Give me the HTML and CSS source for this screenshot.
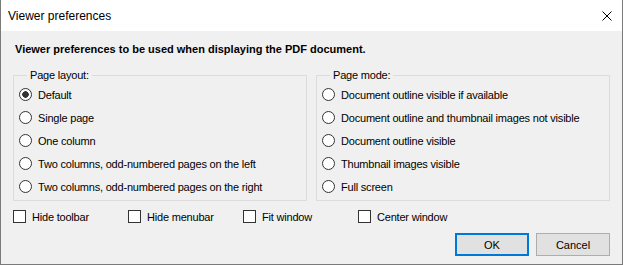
FILE: index.html
```html
<!DOCTYPE html>
<html lang="en">
<head>
  <meta charset="UTF-8">
  <title>Viewer preferences</title>
  <link rel="stylesheet" href="styles.css">
</head>
<body>
  <div class="window">
    <div class="titlebar">
      <span class="title">Viewer preferences</span>
      <svg class="close" width="10" height="10" viewBox="0 0 10 10">
        <path d="M0.5 0.5 L9.5 9.5 M9.5 0.5 L0.5 9.5" stroke="#000" stroke-width="1" fill="none"/>
      </svg>
    </div>

    <div class="content">
      <p class="intro">Viewer preferences to be used when displaying the PDF document.</p>

      <div class="groups">
        <fieldset class="group">
          <legend>Page layout:</legend>
          <label class="option"><input type="radio" name="layout" checked> Default</label>
          <label class="option"><input type="radio" name="layout"> Single page</label>
          <label class="option"><input type="radio" name="layout"> One column</label>
          <label class="option"><input type="radio" name="layout"> Two columns, odd-numbered pages on the left</label>
          <label class="option"><input type="radio" name="layout"> Two columns, odd-numbered pages on the right</label>
        </fieldset>
        <fieldset class="group">
          <legend>Page mode:</legend>
          <label class="option"><input type="radio" name="mode"> Document outline visible if available</label>
          <label class="option"><input type="radio" name="mode"> Document outline and thumbnail images not visible</label>
          <label class="option"><input type="radio" name="mode"> Document outline visible</label>
          <label class="option"><input type="radio" name="mode"> Thumbnail images visible</label>
          <label class="option"><input type="radio" name="mode"> Full screen</label>
        </fieldset>
      </div>

      <div class="checks">
        <label class="check"><input type="checkbox"> Hide toolbar</label>
        <label class="check"><input type="checkbox"> Hide menubar</label>
        <label class="check"><input type="checkbox"> Fit window</label>
        <label class="check"><input type="checkbox"> Center window</label>
      </div>

      <div class="buttons">
        <button type="button" class="btn default">OK</button>
        <button type="button" class="btn">Cancel</button>
      </div>
    </div>
  </div>
</body>
</html>
```

FILE: styles.css
```css
body {
  margin: 0;
  font-family: 'Liberation Sans', Arial, sans-serif;
  font-size: 11px;
  color: #000;
  background: #f0f0f0;
}
.window {
  width: 623px;
  height: 265px;
  box-sizing: border-box;
  border: 1px solid #7a7a7a;
  border-top: none;
  background: #f0f0f0;
  display: flex;
  flex-direction: column;
}
.titlebar {
  height: 31px;
  background: #fff;
  display: flex;
  align-items: center;
  justify-content: space-between;
  padding: 0 10px 0 7px;
}
.title {
  font-size: 12px;
  color: #000;
}
.close {
  display: block;
}
.content {
  flex: 1;
  display: flex;
  flex-direction: column;
  padding: 0 12px 0 12px;
}
.intro {
  margin: 12px 0 0 2px;
  font-weight: bold;
  line-height: 13px;
}
.groups {
  display: flex;
  gap: 9px;
  margin-top: 13px;
}
.group {
  flex: 1;
  margin: 0;
  min-width: 0;
  padding: 1px 4px 2px 5px;
  border: 1px solid #dcdcdc;
  display: flex;
  flex-direction: column;
}
.group legend {
  margin-left: 8px;
  padding: 0 3px;
  line-height: 13px;
  letter-spacing: -0.2px;
}
.option {
  display: flex;
  align-items: center;
  gap: 6px;
  height: 23px;
  white-space: nowrap;
  letter-spacing: -0.2px;
}
.option input,
.check input {
  appearance: none;
  -webkit-appearance: none;
  margin: 0;
  width: 13px;
  height: 13px;
  box-sizing: border-box;
  border: 1px solid #333;
  background: #fff;
  flex: none;
}
.option input {
  border-radius: 50%;
}
.option input:checked {
  background: radial-gradient(circle, #333 0, #333 3px, #fff 3.5px);
}
.checks {
  display: flex;
  margin-top: 9px;
  height: 13px;
}
.check {
  width: 115px;
  display: flex;
  align-items: center;
  gap: 6px;
  white-space: nowrap;
  letter-spacing: -0.2px;
}
.buttons {
  display: flex;
  justify-content: flex-end;
  gap: 7px;
  margin-top: 10px;
}
.btn {
  width: 74px;
  height: 23px;
  font-family: 'Liberation Sans', Arial, sans-serif;
  font-size: 11px;
  color: #000;
  background: #e1e1e1;
  border: 1px solid #adadad;
  padding: 0;
}
.btn.default {
  border: 2px solid #0078d7;
}
```
